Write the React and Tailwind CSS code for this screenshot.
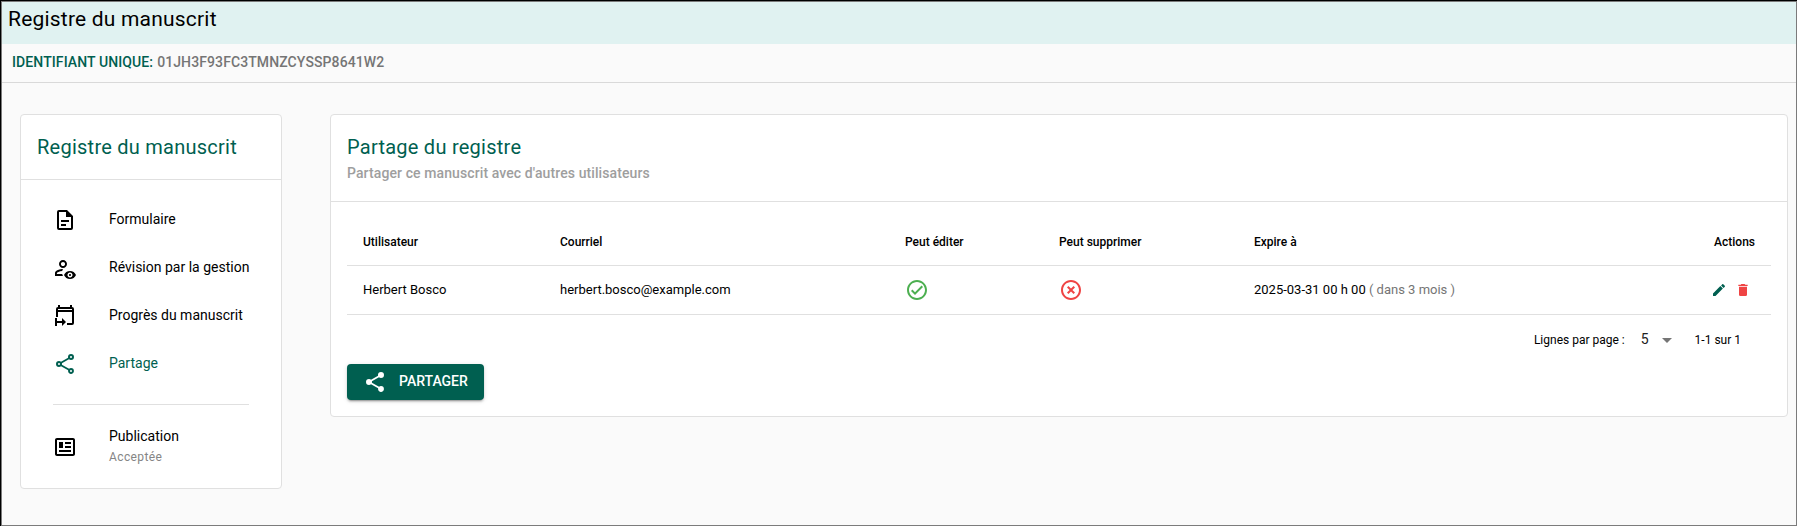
const P = {
  file: 'M6,2A2,2 0 0,0 4,4V20A2,2 0 0,0 6,22H18A2,2 0 0,0 20,20V8L14,2H6M6,4H13V9H18V20H6V4M8,12V14H16V12H8M8,16V18H13V16H8Z',
  accountEye: 'M10 13C9.65 13.5 9.3 14.2 9.19 14.93C6.5 15.16 3.9 16.42 3.9 17V18.1H9.2C9.37 18.78 9.65 19.42 10 20H2V17C2 14.34 7.33 13 10 13M10 4C12.21 4 14 5.79 14 8S12.21 12 10 12 6 10.21 6 8 7.79 4 10 4M10 5.9C8.84 5.9 7.9 6.84 7.9 8S8.84 10.1 10 10.1 12.1 9.16 12.1 8 11.16 5.9 10 5.9M17 18C17.56 18 18 18.44 18 19S17.56 20 17 20 16 19.56 16 19 16.44 18 17 18M17 15C14.27 15 11.94 16.66 11 19C11.94 21.34 14.27 23 17 23C19.73 23 22.06 21.34 23 19C22.06 16.66 19.73 15 17 15M17 21.5C15.62 21.5 14.5 20.38 14.5 19C14.5 17.62 15.62 16.5 17 16.5C18.38 16.5 19.5 17.62 19.5 19C19.5 20.38 18.38 21.5 17 21.5Z',
  calendar: 'M5 3V1H7V3H17V1H19V3A2 2 0 0 1 21 5V19A2 2 0 0 1 19 21H14V19H19V8H5V13H3V5A2 2 0 0 1 5 3M5 5V6H19V5H5M2 14H4V17H9V14L13 18L9 22V19H4V22H2V14Z',
  shareOutline: 'M18,16.08C17.24,16.08 16.56,16.38 16.04,16.85L8.91,12.7C8.96,12.47 9,12.24 9,12C9,11.76 8.96,11.53 8.91,11.3L15.96,7.19C16.5,7.69 17.21,8 18,8A3,3 0 0,0 21,5A3,3 0 0,0 18,2A3,3 0 0,0 15,5C15,5.24 15.04,5.47 15.09,5.7L8.04,9.81C7.5,9.31 6.79,9 6,9A3,3 0 0,0 3,12A3,3 0 0,0 6,15C6.79,15 7.5,14.69 8.04,14.19L15.16,18.34C15.11,18.55 15.08,18.77 15.08,19C15.08,20.61 16.39,21.91 18,21.91C19.61,21.91 20.92,20.61 20.92,19A2.92,2.92 0 0,0 18,16.08M18,4A1,1 0 0,1 18,6A1,1 0 0,1 18,4M6,11A1,1 0 0,1 6,13A1,1 0 0,1 6,11M18,18A1,1 0 0,1 18,20A1,1 0 0,1 18,18Z',
  share: 'M18,16.08C17.24,16.08 16.56,16.38 16.04,16.85L8.91,12.7C8.96,12.47 9,12.24 9,12C9,11.76 8.96,11.53 8.91,11.3L15.96,7.19C16.5,7.69 17.21,8 18,8A3,3 0 0,0 21,5A3,3 0 0,0 18,2A3,3 0 0,0 15,5C15,5.24 15.04,5.47 15.09,5.7L8.04,9.81C7.5,9.31 6.79,9 6,9A3,3 0 0,0 3,12A3,3 0 0,0 6,15C6.79,15 7.5,14.69 8.04,14.19L15.16,18.34C15.11,18.55 15.08,18.77 15.08,19C15.08,20.61 16.39,21.91 18,21.91C19.61,21.91 20.92,20.61 20.92,19A2.92,2.92 0 0,0 18,16.08Z',
  news: 'M20 5V19H4V5H20M20 3H4C2.89 3 2 3.89 2 5V19C2 20.11 2.89 21 4 21H20C21.11 21 22 20.11 22 19V5C22 3.89 21.11 3 20 3M18 15H6V17H18V15M10 7H6V13H10V7M12 9H18V7H12V9M18 11H12V13H18V11Z',
  check: 'M12 2C6.5 2 2 6.5 2 12S6.5 22 12 22 22 17.5 22 12 17.5 2 12 2M12 20C7.59 20 4 16.41 4 12S7.59 4 12 4 20 7.59 20 12 16.41 20 12 20M16.59 7.58L10 14.17L7.41 11.59L6 13L10 17L18 9L16.59 7.58Z',
  close: 'M12,20C7.59,20 4,16.41 4,12C4,7.59 7.59,4 12,4C16.41,4 20,7.59 20,12C20,16.41 16.41,20 12,20M12,2C6.47,2 2,6.47 2,12C2,17.53 6.47,22 12,22C17.53,22 22,17.53 22,12C22,6.47 17.53,2 12,2M14.59,8L12,10.59L9.41,8L8,9.41L10.59,12L8,14.59L9.41,16L12,13.41L14.59,16L16,14.59L13.41,12L16,9.41L14.59,8Z',
  pencil: 'M20.71,7.04C21.1,6.65 21.1,6 20.71,5.63L18.37,3.29C18,2.9 17.35,2.9 16.96,3.29L15.12,5.12L18.87,8.87M3,17.25V21H6.75L17.81,9.93L14.06,6.18L3,17.25Z',
  trash: 'M19,4H15.5L14.5,3H9.5L8.5,4H5V6H19M6,19A2,2 0 0,0 8,21H16A2,2 0 0,0 18,19V7H6V19Z',
  down: 'M7,10L12,15L17,10H7Z',
};

function Icon({ name, className = 'size-6' }) {
  return (
    <svg viewBox="0 0 24 24" fill="currentColor" fillRule="evenodd" className={`shrink-0 ${className}`}>
      <path d={P[name]} />
    </svg>
  );
}

function NavItem({ icon, label, active }) {
  return (
    <li className={`flex h-12 items-center ${active ? 'text-[#005f50]' : 'text-black'}`}>
      <Icon name={icon} />
      <span className="ml-8 pb-0.5 text-[14px] leading-4 whitespace-nowrap">{label}</span>
    </li>
  );
}

const COLS = 'grid grid-cols-[197px_345px_154px_195px_1fr_auto] pl-4 items-center border-b border-[#e0e0e0]';

export default function App() {
  return (
    <div className="h-[526px] w-[1797px] overflow-hidden border-t border-l border-black bg-[#fafafa] font-[Roboto,sans-serif] text-black">
      <div className="h-full border border-[#7b7b7b]">
        <header className="flex h-[42px] items-start bg-[#e0f2f1] pt-px pl-1.5">
          <h1 className="text-[21px] leading-8 tracking-[0.2px]">Registre du manuscrit</h1>
        </header>
        <div className="flex h-[39px] items-center border-b border-[#d9d9d9] pb-0.5 pl-2.5 text-[14px] font-medium tracking-[0.1px]">
          <span className="text-[#005f50]">IDENTIFIANT UNIQUE:</span>
          <span className="ml-1 text-[#757575]">01JH3F93FC3TMNZCYSSP8641W2</span>
        </div>

        <main className="flex items-start gap-12 pt-[31px] pl-[18px]">
          <aside className="h-[375px] w-[262px] rounded border border-[#e0e0e0] bg-white">
            <div className="flex h-[65px] items-center border-b border-[#e0e0e0] pl-4">
              <h2 className="text-[20px] leading-8 tracking-[0.25px] text-[#005f50]">Registre du manuscrit</h2>
            </div>
            <ul className="px-8 pt-4">
              <NavItem icon="file" label="Formulaire" />
              <NavItem icon="accountEye" label="Révision par la gestion" />
              <NavItem icon="calendar" label="Progrès du manuscrit" />
              <NavItem icon="shareOutline" label="Partage" active />
            </ul>
            <div className="mx-8 mt-4 border-t border-[#e0e0e0]" />
            <div className="mt-[21px] flex items-center px-8">
              <Icon name="news" />
              <div className="ml-8">
                <div className="text-[14px] leading-[20px]">Publication</div>
                <div className="text-[12px] leading-[22px] tracking-[0.4px] text-[#858585]">Acceptée</div>
              </div>
            </div>
          </aside>

          <section className="h-[303px] w-[1458px] rounded border border-[#e0e0e0] bg-white">
            <div className="h-[87px] border-b border-[#e0e0e0] pt-4 pl-4">
              <h2 className="text-[20px] leading-8 tracking-[0.25px] text-[#005f50]">Partage du registre</h2>
              <p className="text-[14px] leading-[20px] font-medium tracking-[0.1px] text-[#9e9e9e]">
                Partager ce manuscrit avec d'autres utilisateurs
              </p>
            </div>
            <div className="px-4 pt-4">
              <div className={`${COLS} h-12 pr-4 text-[12px] font-medium`}>
                <span>Utilisateur</span>
                <span>Courriel</span>
                <span>Peut éditer</span>
                <span>Peut supprimer</span>
                <span>Expire à</span>
                <span>Actions</span>
              </div>
              <div className={`${COLS} h-[49px] pr-5 text-[13px]`}>
                <span>Herbert Bosco</span>
                <span>herbert.bosco@example.com</span>
                <Icon name="check" className="size-6 text-[#4caf50]" />
                <Icon name="close" className="size-6 text-[#ef4444]" />
                <span>
                  2025-03-31 00 h 00 <span className="text-[#757575]">( dans 3 mois )</span>
                </span>
                <span className="flex gap-2">
                  <Icon name="pencil" className="size-4 text-[#005f50]" />
                  <Icon name="trash" className="size-4 text-[#ef4444]" />
                </span>
              </div>
              <div className="flex h-[49px] items-center justify-end pr-[30px] text-[12px]">
                <span>Lignes par page :</span>
                <span className="ml-4 text-[14px] text-[#212121]">5</span>
                <Icon name="down" className="ml-1.5 size-6 text-[#757575]" />
                <span className="ml-4">1-1 sur 1</span>
              </div>
              <button className="flex h-9 w-[137px] items-center rounded bg-[#005f50] pl-4 text-[14px] font-medium text-white shadow-[0_3px_1px_-2px_rgba(0,0,0,.2),0_2px_2px_0_rgba(0,0,0,.14),0_1px_5px_0_rgba(0,0,0,.12)]">
                <Icon name="share" />
                <span className="ml-3 pb-0.5">PARTAGER</span>
              </button>
            </div>
          </section>
        </main>
      </div>
    </div>
  );
}
